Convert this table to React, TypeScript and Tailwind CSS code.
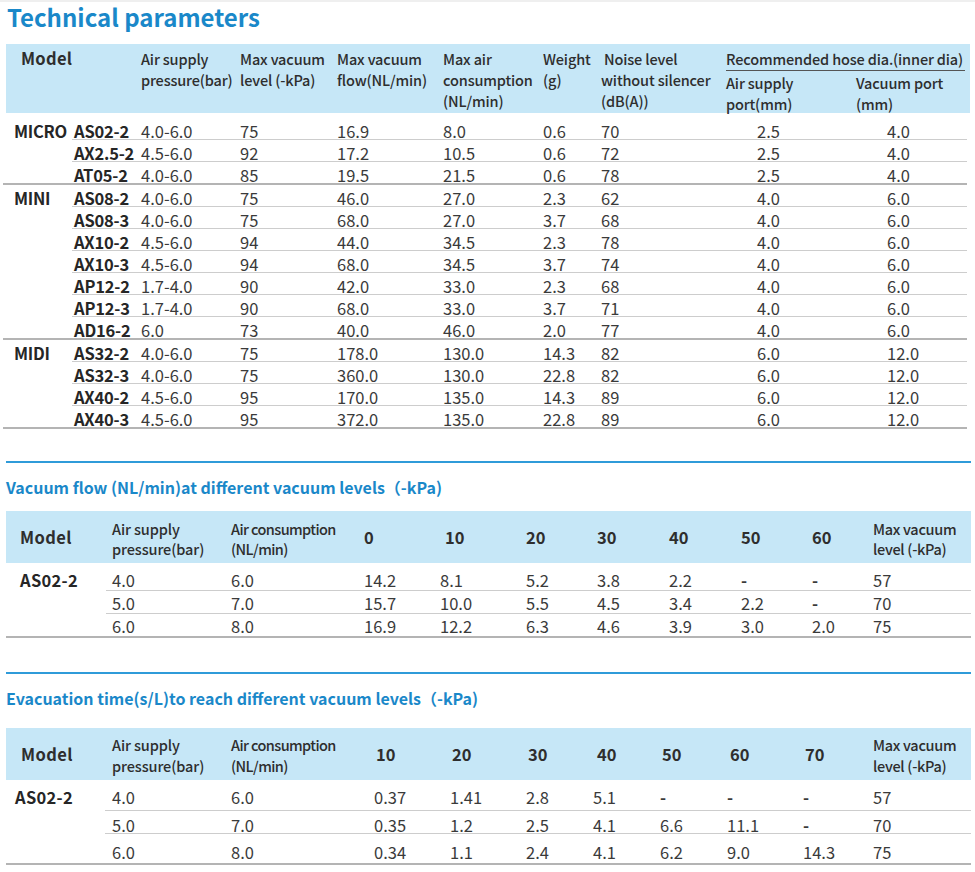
import React from "react";

const t1Groups = [
  {
    name: "MICRO",
    rows: [
      ["AS02-2", "4.0-6.0", "75", "16.9", "8.0", "0.6", "70", "2.5", "4.0"],
      ["AX2.5-2", "4.5-6.0", "92", "17.2", "10.5", "0.6", "72", "2.5", "4.0"],
      ["AT05-2", "4.0-6.0", "85", "19.5", "21.5", "0.6", "78", "2.5", "4.0"],
    ],
  },
  {
    name: "MINI",
    rows: [
      ["AS08-2", "4.0-6.0", "75", "46.0", "27.0", "2.3", "62", "4.0", "6.0"],
      ["AS08-3", "4.0-6.0", "75", "68.0", "27.0", "3.7", "68", "4.0", "6.0"],
      ["AX10-2", "4.5-6.0", "94", "44.0", "34.5", "2.3", "78", "4.0", "6.0"],
      ["AX10-3", "4.5-6.0", "94", "68.0", "34.5", "3.7", "74", "4.0", "6.0"],
      ["AP12-2", "1.7-4.0", "90", "42.0", "33.0", "2.3", "68", "4.0", "6.0"],
      ["AP12-3", "1.7-4.0", "90", "68.0", "33.0", "3.7", "71", "4.0", "6.0"],
      ["AD16-2", "6.0", "73", "40.0", "46.0", "2.0", "77", "4.0", "6.0"],
    ],
  },
  {
    name: "MIDI",
    rows: [
      ["AS32-2", "4.0-6.0", "75", "178.0", "130.0", "14.3", "82", "6.0", "12.0"],
      ["AS32-3", "4.0-6.0", "75", "360.0", "130.0", "22.8", "82", "6.0", "12.0"],
      ["AX40-2", "4.5-6.0", "95", "170.0", "135.0", "14.3", "89", "6.0", "12.0"],
      ["AX40-3", "4.5-6.0", "95", "372.0", "135.0", "22.8", "89", "6.0", "12.0"],
    ],
  },
];

const flowRows = [
  ["4.0", "6.0", "14.2", "8.1", "5.2", "3.8", "2.2", "-", "-", "57"],
  ["5.0", "7.0", "15.7", "10.0", "5.5", "4.5", "3.4", "2.2", "-", "70"],
  ["6.0", "8.0", "16.9", "12.2", "6.3", "4.6", "3.9", "3.0", "2.0", "75"],
];

const evacRows = [
  ["4.0", "6.0", "0.37", "1.41", "2.8", "5.1", "-", "-", "-", "57"],
  ["5.0", "7.0", "0.35", "1.2", "2.5", "4.1", "6.6", "11.1", "-", "70"],
  ["6.0", "8.0", "0.34", "1.1", "2.4", "4.1", "6.2", "9.0", "14.3", "75"],
];

const TechnicalTable = () => (
  <div>
    {/* header */}
    <div className="ml-[6px] w-[964px] h-[69px] bg-[#c6e7f7] flex text-[14.5px] tracking-[-0.15px] leading-[21px] font-medium text-[#2e2e2e] pt-[4px] whitespace-nowrap">
      <div className="w-[135px] pl-[15px] tracking-[0.3px] text-[16.5px] font-bold">Model</div>
      <div className="grid grid-cols-[99px_97px_106px_100px_58px_125px_1fr]">
        <div>Air supply<br />pressure(bar)</div>
        <div>Max vacuum<br />level (-kPa)</div>
        <div>Max vacuum<br />flow(NL/min)</div>
        <div>Max air<br />consumption<br />(NL/min)</div>
        <div>Weight<br />(g)</div>
        <div><span className="pl-[3px]">Noise level</span><br />without silencer<br />(dB(A))</div>
        <div className="w-[239px]">
          <div className="border-b border-[#555] pb-[1px]">Recommended hose dia.(inner dia)</div>
          <div className="grid grid-cols-[130px_1fr] pt-[1px]">
            <div>Air supply<br />port(mm)</div>
            <div>Vacuum port<br />(mm)</div>
          </div>
        </div>
      </div>
    </div>
    {/* body */}
    <div className="ml-[3px] w-[964px] mt-[5px] text-[16.5px] leading-[22px] text-[#3a3a3a]">
      {t1Groups.map((g) => (
        <div key={g.name} className="flex border-b-2 border-[#b4b4b4]">
          <div className="w-[69px] pl-[11px] pt-[2px] font-bold text-[#262626] tracking-[-0.3px]">{g.name}</div>
          <div className="flex-1">
            {g.rows.map((r, i) => (
              <div
                key={r[0]}
                className={
                  i < g.rows.length - 1
                    ? "grid grid-cols-[69px_99px_97px_106px_100px_58px_125px_130px_1fr] h-[22px] pt-[2px] border-b border-[#cdcdcd]"
                    : "grid grid-cols-[69px_99px_97px_106px_100px_58px_125px_130px_1fr] h-[21px] pt-[2px]"
                }
              >
                <div className="pl-[2px] font-bold text-[#262626] tracking-[-0.2px]">{r[0]}</div>
                <div>{r[1]}</div>
                <div>{r[2]}</div>
                <div>{r[3]}</div>
                <div>{r[4]}</div>
                <div>{r[5]}</div>
                <div>{r[6]}</div>
                <div className="pl-[31px]">{r[7]}</div>
                <div className="pl-[31px]">{r[8]}</div>
              </div>
            ))}
          </div>
        </div>
      ))}
    </div>
  </div>
);

const SectionTitle = ({ children }: { children: React.ReactNode }) => (
  <div>
    <div className="ml-[6px] w-[965px] h-[2px] bg-[#2f9bd9]" />
    <div className="pl-[6px] mt-[13px] text-[16px] leading-[22px] font-bold text-[#1a88c9] whitespace-nowrap">{children}</div>
  </div>
);

const FlowTable = () => (
  <div className="ml-[6px] w-[965px]">
    <div className="h-[52px] bg-[#c6e7f7] flex items-center text-[14.5px] tracking-[-0.1px] leading-[20px] font-medium text-[#2e2e2e] whitespace-nowrap">
      <div className="w-[106px] pl-[14px] text-[16.5px] font-bold tracking-[0.4px]">Model</div>
      <div className="grid grid-cols-[119px_133px_76px_86px_71px_72px_72px_71px_61px_1fr] items-center flex-1">
        <div className="pt-[4px]">Air supply<br />pressure(bar)</div>
        <div className="pt-[4px] tracking-[-0.6px]">Air consumption<br />(NL/min)</div>
        <div className="font-bold text-[16.5px]">0</div>
        <div className="pl-[5px] font-bold text-[16.5px]">10</div>
        <div className="font-bold text-[16.5px]">20</div>
        <div className="font-bold text-[16.5px]">30</div>
        <div className="font-bold text-[16.5px]">40</div>
        <div className="font-bold text-[16.5px]">50</div>
        <div className="font-bold text-[16.5px]">60</div>
        <div className="pt-[4px] tracking-[-0.3px]">Max vacuum<br />level (-kPa)</div>
      </div>
    </div>
    <div className="mt-[5px] flex border-b-2 border-[#b4b4b4] text-[16.5px] leading-[22px] text-[#3a3a3a]">
      <div className="w-[100px] pl-[14px] pt-[1px] font-bold text-[#262626] tracking-[0.3px]">AS02-2</div>
      <div className="flex-1">
        {flowRows.map((r, i) => (
          <div
            key={i}
            className={
              i < 2
                ? "grid grid-cols-[125px_133px_76px_86px_71px_72px_72px_71px_61px_1fr] h-[23px] pt-[1px] border-b border-[#cdcdcd]"
                : "grid grid-cols-[125px_133px_76px_86px_71px_72px_72px_71px_61px_1fr] h-[22px] pt-[1px]"
            }
          >
            <div className="pl-[6px]">{r[0]}</div>
            {r.slice(1).map((v, j) => (
              <div key={j} className={v === "-" ? "font-bold" : ""}>{v}</div>
            ))}
          </div>
        ))}
      </div>
    </div>
  </div>
);

const EvacTable = () => (
  <div className="ml-[6px] w-[965px]">
    <div className="h-[52px] bg-[#c6e7f7] flex items-center text-[14.5px] tracking-[-0.1px] leading-[21px] font-medium text-[#2e2e2e] whitespace-nowrap">
      <div className="w-[100px] pl-[15px] text-[16.5px] font-bold tracking-[0.4px]">Model</div>
      <div className="grid grid-cols-[125px_143px_76px_76px_67px_67px_67px_76px_70px_1fr] items-center flex-1">
        <div className="pl-[6px] pt-[1px]">Air supply<br />pressure(bar)</div>
        <div className="pt-[1px] tracking-[-0.6px]">Air consumption<br />(NL/min)</div>
        <div className="pl-[2px] font-bold text-[16.5px]">10</div>
        <div className="pl-[2px] font-bold text-[16.5px]">20</div>
        <div className="pl-[2px] font-bold text-[16.5px]">30</div>
        <div className="pl-[4px] font-bold text-[16.5px]">40</div>
        <div className="pl-[2px] font-bold text-[16.5px]">50</div>
        <div className="pl-[3px] font-bold text-[16.5px]">60</div>
        <div className="pl-[2px] font-bold text-[16.5px]">70</div>
        <div className="pt-[1px] tracking-[-0.3px]">Max vacuum<br />level (-kPa)</div>
      </div>
    </div>
    <div className="mt-[4px] flex border-b-2 border-[#b4b4b4] text-[16.5px] leading-[22px] text-[#3a3a3a]">
      <div className="w-[99px] pl-[9px] pt-[2px] font-bold text-[#262626] tracking-[0.3px]">AS02-2</div>
      <div className="flex-1">
        {evacRows.map((r, i) => (
          <div
            key={i}
            className={
              i === 0
                ? "grid grid-cols-[126px_143px_76px_76px_67px_67px_67px_76px_70px_1fr] h-[27px] pt-[2px] border-b border-[#cdcdcd]"
                : i === 1
                ? "grid grid-cols-[126px_143px_76px_76px_67px_67px_67px_76px_70px_1fr] h-[23px] pt-[3px] border-b border-[#cdcdcd]"
                : "grid grid-cols-[126px_143px_76px_76px_67px_67px_67px_76px_70px_1fr] h-[29px] pt-[7px]"
            }
          >
            <div className="pl-[7px]">{r[0]}</div>
            {r.slice(1).map((v, j) => (
              <div key={j} className={v === "-" ? "font-bold" : ""}>{v}</div>
            ))}
          </div>
        ))}
      </div>
    </div>
  </div>
);

export default function App() {
  return (
    <div className="w-[975px] h-[872px] bg-white overflow-hidden font-['Noto_Sans_CJK_SC',sans-serif]">
      <div className="h-[2px] bg-[#efefef]" />
      <h1 className="pl-[7px] text-[24px] leading-[30px] font-bold text-[#1a88c9]">Technical parameters</h1>
      <div className="mt-[12px]">
        <TechnicalTable />
      </div>
      <div className="mt-[32px]">
        <SectionTitle>Vacuum flow (NL/min)at different vacuum levels（-kPa)</SectionTitle>
      </div>
      <div className="mt-[13px]">
        <FlowTable />
      </div>
      <div className="mt-[34px]">
        <SectionTitle>Evacuation time(s/L)to reach different vacuum levels（-kPa)</SectionTitle>
      </div>
      <div className="mt-[19px]">
        <EvacTable />
      </div>
    </div>
  );
}
